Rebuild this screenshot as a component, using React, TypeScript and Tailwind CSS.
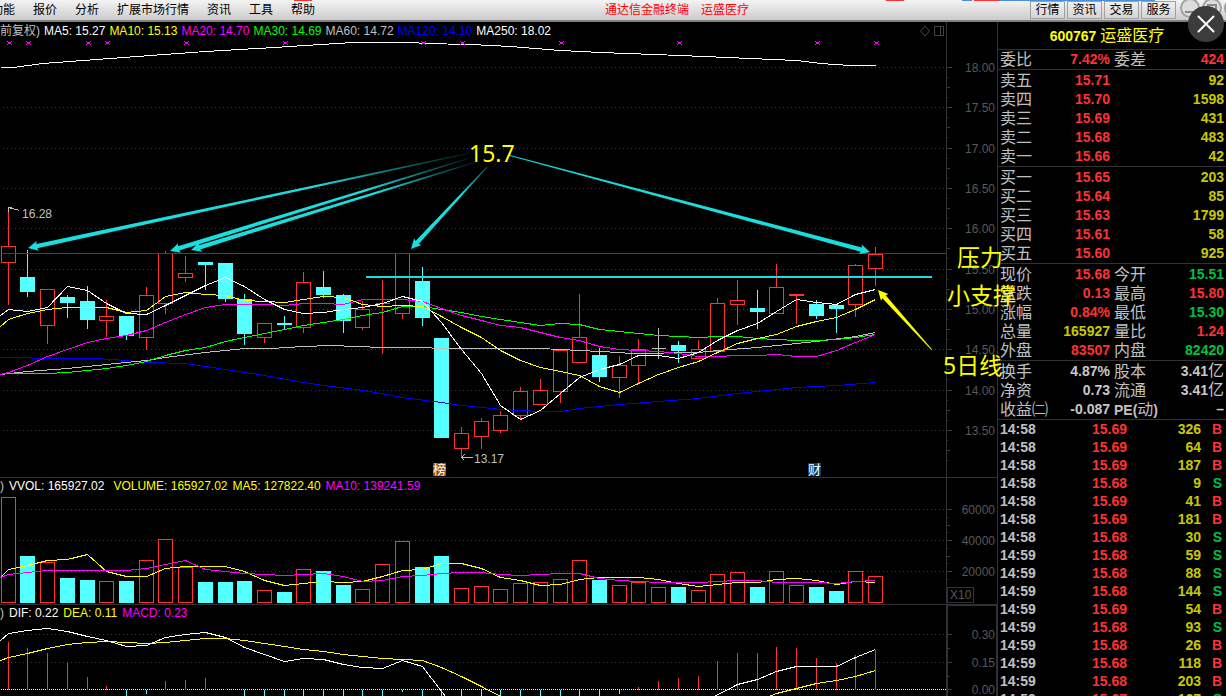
import { useId, type ReactNode } from 'react'
import { X } from 'lucide-react'

type Point = [number, number]
type Kind = 'up' | 'down' | 'flat'
type Candle = [Kind, number, number, number, number]

const RED = '#ff3232'
const CYAN = '#54ffff'
const GRAY = '#c0c0c0'
const GRID = '#3a3a3a'

const xAt = (i: number) => Math.floor(8.2 + i * 19.71)

// kind, high, body top, body bottom, low
const candles: Candle[] = [
  ['up', 208, 246, 262, 304], ['down', 249, 277, 291, 296], ['up', 288, 289, 325, 343],
  ['down', 294, 297, 302, 317], ['down', 285, 301, 319, 328], ['up', 299, 316, 320, 336],
  ['down', 316, 316, 335, 339], ['up', 286, 295, 337, 349], ['up', 250, 253, 303, 313],
  ['up', 255, 273, 277, 281], ['down', 262, 262, 264, 289], ['down', 263, 263, 298, 301],
  ['down', 293, 299, 333, 344], ['up', 322, 323, 337, 342], ['down', 315, 323, 324, 328],
  ['up', 271, 282, 327, 332], ['down', 270, 287, 294, 297], ['down', 293, 295, 320, 332],
  ['up', 300, 309, 327, 329], ['up', 279, 303, 303, 353], ['up', 253, 253, 313, 318],
  ['down', 266, 281, 317, 325], ['down', 338, 338, 437, 437], ['up', 426, 433, 448, 457],
  ['up', 417, 421, 436, 448], ['up', 410, 415, 430, 432], ['up', 386, 391, 415, 418],
  ['up', 378, 390, 404, 404], ['up', 348, 350, 391, 402], ['up', 293, 337, 362, 362],
  ['down', 347, 355, 376, 381], ['up', 355, 365, 377, 397], ['up', 338, 349, 365, 383],
  ['flat', 327, 348, 348, 358], ['down', 340, 345, 350, 362], ['up', 339, 349, 358, 358],
  ['up', 297, 303, 351, 351], ['up', 279, 300, 304, 324], ['down', 289, 308, 311, 328],
  ['up', 263, 287, 313, 313], ['up', 293, 294, 295, 323], ['down', 299, 304, 315, 318],
  ['down', 305, 305, 308, 332], ['up', 263, 265, 304, 316], ['up', 246, 254, 268, 285],
]

const volumeTops = [
  497, 556, 562, 578, 580, 581, 581, 560, 539, 567, 582, 582, 581, 590, 592, 569, 571, 585, 589, 564, 541, 567, 556,
  588, 586, 589, 583, 582, 579, 560, 580, 585, 582, 587, 587, 590, 574, 572, 587, 571, 585, 587, 591, 571, 576,
]

// bar end of each MACD column, the zero line is at 689
const macdEnds = [
  641, 647, 652, 662, 676, 685, 697, 693, 680, 679, 677, 688, 697, 697, 697, 697, 697, 697, 697, 697, 691, 697, 697,
  697, 697, 697, 697, 697, 697, 697, 697, 693, 686, 680, 677, 675, 660, 652, 652, 646, 647, 657, 662, 654, 649,
]

const ma5 = [
  309, 311, 307, 286, 290, 303, 313, 314, 305, 295, 285, 277, 286, 299, 309, 313, 312, 309, 307, 303, 296, 301, 322,
  349, 373, 405, 419, 410, 393, 377, 369, 364, 355, 355, 358, 352, 340, 330, 323, 311, 299, 302, 304, 294, 289,
]
const ma10 = [
  319, 313, 309, 307, 307, 307, 312, 310, 296, 292, 294, 295, 300, 301, 302, 299, 296, 297, 304, 306, 305, 306, 316,
  327, 337, 350, 360, 367, 371, 375, 386, 392, 383, 374, 367, 361, 352, 343, 338, 334, 326, 321, 317, 309, 299,
]
const ma20 = [
  372, 365, 356, 349, 342, 338, 335, 330, 322, 314, 307, 304, 304, 304, 305, 303, 303, 304, 299, 299, 299, 301, 308,
  315, 320, 325, 327, 332, 337, 340, 346, 349, 350, 351, 353, 356, 356, 355, 355, 354, 356, 356, 350, 342, 334,
]
const ma30 = [
  373, 373, 373, 372, 370, 368, 365, 361, 355, 350, 347, 341, 337, 333, 329, 325, 322, 319, 315, 312, 306, 306, 309,
  312, 316, 319, 322, 325, 323, 324, 329, 331, 333, 335, 336, 337, 336, 336, 338, 339, 340, 340, 339, 337, 334,
]
const ma60: Point[] = [
  [0, 374], [27, 371], [67, 368], [106, 364], [126, 362], [146, 360], [165, 357], [205, 352], [244, 348], [270, 348],
  [303, 346], [330, 345], [382, 347], [422, 347], [441, 348], [540, 348], [579, 350], [619, 352], [630, 353],
  [698, 352], [717, 350], [757, 347], [796, 343], [816, 341], [855, 336], [875, 332],
]
const ma120: Point[] = [
  [0, 357], [60, 358], [96, 358], [126, 360], [146, 362], [185, 363], [205, 366], [225, 369], [264, 375], [303, 382],
  [323, 385], [363, 390], [402, 397], [441, 402], [461, 405], [501, 409], [540, 411], [560, 411], [579, 408],
  [619, 404], [658, 401], [698, 398], [737, 393], [757, 391], [796, 387], [836, 385], [875, 382],
]
const ma250: Point[] = [
  [0, 67], [13, 67], [42, 63], [96, 59], [150, 55], [205, 51], [274, 47], [320, 44], [353, 42], [413, 42], [423, 43],
  [470, 44], [510, 46], [560, 50], [600, 52], [680, 55], [750, 58], [796, 60], [820, 63], [850, 65], [875, 65],
]

const volMa5 = [
  569, 565, 560, 559, 554, 571, 576, 576, 568, 566, 566, 566, 571, 580, 585, 583, 581, 582, 581, 576, 570, 569, 563,
  563, 568, 577, 580, 585, 584, 579, 577, 577, 577, 579, 583, 586, 584, 582, 582, 579, 578, 580, 584, 581, 582,
]
const volMa10 = [
  574, 572, 570, 570, 570, 570, 570, 568, 564, 560, 569, 571, 573, 574, 575, 574, 573, 576, 581, 580, 576, 575, 573,
  572, 572, 574, 575, 574, 573, 573, 578, 580, 581, 582, 582, 582, 581, 580, 580, 582, 582, 582, 583, 581, 580,
]

const difStart = [
  633, 630, 628, 631, 636, 640, 646, 645, 637, 634, 632, 637, 647, 654, 661, 658, 659, 664, 667, 668, 660, 666, 691,
]
const difEnd: Point[] = [
  [712, 697], [737, 684], [757, 679], [776, 671], [796, 666], [836, 666], [855, 657], [875, 649],
]
const deaStart = [
  657, 653, 648, 644, 642, 641, 642, 643, 642, 640, 638, 638, 640, 643, 646, 649, 651, 654, 656, 658, 659, 660, 667,
  676, 686,
]
const deaEnd: Point[] = [[766, 697], [776, 693], [796, 688], [816, 683], [836, 680], [855, 676], [875, 670]]

const series = (ys: number[], start: number): Point[] => [[0, start], ...ys.map((y, i): Point => [xAt(i), y])]

const priceLabels: [number, string][] = [
  [67, '18.00'], [107, '17.50'], [148, '17.00'], [188, '16.50'], [228, '16.00'],
  [269, '15.50'], [309, '15.00'], [349, '14.50'], [390, '14.00'], [430, '13.50'],
]
const volumeLabels: [number, string][] = [[509, '60000'], [540, '40000'], [571, '20000']]
const macdLabels: [number, string][] = [[634, '0.30'], [662, '0.15'], [689, '0.00']]

function Line({ points, color }: { points: Point[]; color: string }) {
  return <polyline points={points.map((p) => p.join(',')).join(' ')} fill="none" stroke={color} />
}

function GridLines({ ys }: { ys: number[] }) {
  return (
    <>
      {ys.map((y) => (
        <line key={y} x1="2" x2="946" y1={y} y2={y} stroke={GRID} strokeDasharray="1 3" />
      ))}
    </>
  )
}

function Arrow({ from, to, color, fade }: { from: Point; to: Point; color: string; fade: number }) {
  const id = useId()
  const length = Math.hypot(to[0] - from[0], to[1] - from[1])
  const ux = (to[0] - from[0]) / length
  const uy = (to[1] - from[1]) / length
  const at = (back: number, side: number) =>
    `${to[0] - ux * back - uy * side},${to[1] - uy * back + ux * side}`
  const points = [
    at(length, 0.5), at(9, 2.2), at(10, 5), at(0, 0), at(10, -5), at(9, -2.2), at(length, -0.5),
  ].join(' ')

  return (
    <>
      <linearGradient id={id} gradientUnits="userSpaceOnUse" x1={from[0]} y1={from[1]} x2={to[0]} y2={to[1]}>
        <stop offset="0" stopColor={color} stopOpacity={fade} />
        <stop offset="0.35" stopColor={color} />
      </linearGradient>
      <polygon points={points} fill={`url(#${id})`} />
    </>
  )
}

function Legend({ items, children }: { items: [string, string][]; children?: ReactNode }) {
  return (
    <div className="flex h-4 items-center gap-[5px] overflow-hidden text-xs whitespace-nowrap">
      {items.map(([text, color]) => (
        <span key={text} className={color}>
          {text}
        </span>
      ))}
      {children}
    </div>
  )
}

function Axis({ top, height, labels }: { top: number; height: number; labels: [number, string][] }) {
  const step = labels[1][0] - labels[0][0]
  return (
    <svg className="block w-full" viewBox={`0 ${top} 50 ${height}`} fontSize="12">
      <g stroke={GRID} shapeRendering="crispEdges" transform="translate(0 0.5)">
        {labels.map(([y]) => (
          <g key={y}>
            <path d={`M0 ${y}h5`} />
            <path d={`M0 ${y + Math.round(step / 2)}h3`} />
            <path d={`M0 ${y + Math.round(step / 4)}h1`} />
            <path d={`M0 ${y + Math.round((step * 3) / 4)}h1`} />
          </g>
        ))}
      </g>
      {labels.map(([y, text]) => (
        <text key={y} x="48" y={y + 5} textAnchor="end" fill="#585858">
          {text}
        </text>
      ))}
    </svg>
  )
}

function PriceChart() {
  return (
    <svg className="block h-[437px] w-full" viewBox="0 40 946 437" role="img" aria-label="K线图">
      <g shapeRendering="crispEdges" transform="translate(0.5 0.5)">
        <GridLines ys={priceLabels.map(([y]) => y)} />
        {candles.map(([kind, high, top, bottom, low], i) => {
          const color = kind === 'up' ? RED : kind === 'down' ? CYAN : GRAY
          return (
            <g key={i} stroke={color}>
              <line x1={xAt(i)} x2={xAt(i)} y1={high} y2={low + 0.5} />
              {top === bottom ? (
                <line x1={xAt(i) - 7} x2={xAt(i) + 7} y1={top} y2={top} />
              ) : (
                <rect
                  x={xAt(i) - 7}
                  y={top}
                  width="14"
                  height={bottom - top}
                  fill={kind === 'down' ? CYAN : '#000'}
                />
              )}
            </g>
          )
        })}
        <Line points={ma250} color="#fff" />
        <Line points={ma120} color="#0000ff" />
        <Line points={ma60} color={GRAY} />
        <Line points={series(ma30, 374)} color="#00ff00" />
        <Line points={series(ma20, 374)} color="#ff00ff" />
        <Line points={series(ma10, 326)} color="#ffff00" />
        <Line points={series(ma5, 315)} color="#fff" />
        <line x1="0" x2="946" y1="253" y2="253" stroke="#e00000" />
        <path d="M8 207h3M8 207v4M8 207l11 3" stroke={GRAY} fill="none" />
        <path d="M461 457h11M461 457l3 -3M461 457l3 3" stroke={GRAY} fill="none" />
      </g>
      {[9, 28, 88, 107, 186, 285, 423, 462, 561, 679, 817, 876].map((x) => (
        <path
          key={x}
          d={`M${x - 2} 41h1v1h3v-1h1v1h-1v2h1v1h-1v-1h-3v1h-1v-1h1v-2h-1z`}
          fill="#ff00ff"
          shapeRendering="crispEdges"
        />
      ))}
      <rect x="366" y="276" width="566" height="2" fill="#18dede" />
      <Arrow from={[470, 153]} to={[28, 248]} color="#18dede" fade={0.1} />
      <Arrow from={[470, 158]} to={[170, 251]} color="#18dede" fade={0.1} />
      <Arrow from={[476, 162]} to={[191, 250]} color="#18dede" fade={0.1} />
      <Arrow from={[487, 167]} to={[411, 249]} color="#18dede" fade={0.4} />
      <Arrow from={[508, 155]} to={[870, 252]} color="#18dede" fade={0.9} />
      <Arrow from={[932, 350]} to={[878, 290]} color="#ffff00" fade={0.9} />
      <g fontSize="12" fill={GRAY}>
        <text x="22" y="218">16.28</text>
        <text x="474" y="463">13.17</text>
      </g>
      <text x="469" y="162" fontSize="23" fill="#ffff00" className="font-['Noto_Sans',sans-serif]">
        15.7
      </text>
      <rect x="433" y="463" width="13" height="13" fill="#a05008" />
      <text x="433" y="474" fontSize="13" fill="#fff">榜</text>
      <rect x="808" y="463" width="13" height="13" fill="#084068" />
      <text x="808" y="474" fontSize="13" fill="#fff">财</text>
    </svg>
  )
}

function VolumeChart() {
  return (
    <svg className="block h-[110px] w-full" viewBox="0 494 946 110" role="img" aria-label="成交量">
      <g shapeRendering="crispEdges" transform="translate(0.5 0.5)">
        <GridLines ys={volumeLabels.map(([y]) => y)} />
        {volumeTops.map((top, i) => {
          const down = candles[i][0] === 'down'
          return (
            <rect
              key={i}
              x={xAt(i) - 7}
              y={top}
              width="14"
              height={602 - top}
              fill={down ? CYAN : '#000'}
              stroke={down ? CYAN : RED}
            />
          )
        })}
        <Line points={series(volMa5, 577)} color="#ffff00" />
        <Line points={series(volMa10, 577)} color="#ff00ff" />
      </g>
    </svg>
  )
}

function MacdChart() {
  return (
    <svg className="block h-[75px] w-full" viewBox="0 621 946 75" role="img" aria-label="MACD">
      <g shapeRendering="crispEdges" transform="translate(0.5 0.5)">
        <GridLines ys={[634, 662]} />
        <line x1="0" x2="946" y1="689" y2="689" stroke="#fff" strokeDasharray="1 1" />
        {macdEnds.map((end, i) => (
          <line key={i} x1={xAt(i)} x2={xAt(i)} y1="689" y2={end} stroke={end < 689 ? RED : CYAN} />
        ))}
        <Line points={[...series(difStart, 640), [446, 697]]} color="#fff" />
        <Line points={difEnd} color="#fff" />
        <Line points={[...series(deaStart, 660), [502, 697]]} color="#ffff00" />
        <Line points={deaEnd} color="#ffff00" />
      </g>
    </svg>
  )
}

const quoteRed = 'text-[#ff3232]'
const quoteGreen = 'text-[#00c040]'
const quoteYellow = 'text-[#c8c800]'
const quoteGray = 'text-[#c8c8c8]'

const asks = [['卖五', '15.71', '92'], ['卖四', '15.70', '1598'], ['卖三', '15.69', '431'], ['卖二', '15.68', '483'], ['卖一', '15.66', '42']]
const bids = [['买一', '15.65', '203'], ['买二', '15.64', '85'], ['买三', '15.63', '1799'], ['买四', '15.61', '58'], ['买五', '15.60', '925']]

type StatRow = [string, string, string, ReactNode, ReactNode, string]

const ratio: StatRow[] = [['委比', '7.42%', quoteRed, '委差', '424', quoteRed]]
const quote: StatRow[] = [
  ['现价', '15.68', quoteRed, '今开', '15.51', quoteGreen],
  ['涨跌', '0.13', quoteRed, '最高', '15.80', quoteRed],
  ['涨幅', '0.84%', quoteRed, '最低', '15.30', quoteGreen],
  ['总量', '165927', quoteYellow, '量比', '1.24', quoteRed],
  ['外盘', '83507', quoteRed, '内盘', '82420', quoteGreen],
]
const shares = (
  <>
    3.41<span className="text-base leading-none font-normal">亿</span>
  </>
)
const basics: StatRow[] = [
  ['换手', '4.87%', quoteGray, '股本', shares, quoteGray],
  ['净资', '0.73', quoteGray, '流通', shares, quoteGray],
  [
    '收益㈡',
    '-0.087',
    quoteGray,
    <>
      <span className="text-sm leading-none font-bold">PE(</span>动<span className="text-sm leading-none font-bold">)</span>
    </>,
    '–',
    quoteGray,
  ],
]

const ticks: [string, string, string, 'B' | 'S'][] = [
  ['14:58', '15.69', '326', 'B'], ['14:58', '15.69', '64', 'B'], ['14:58', '15.69', '187', 'B'],
  ['14:58', '15.68', '9', 'S'], ['14:58', '15.69', '41', 'B'], ['14:58', '15.69', '181', 'B'],
  ['14:58', '15.68', '30', 'S'], ['14:59', '15.68', '59', 'S'], ['14:59', '15.68', '88', 'S'],
  ['14:59', '15.68', '144', 'S'], ['14:59', '15.69', '54', 'B'], ['14:59', '15.68', '93', 'S'],
  ['14:59', '15.68', '26', 'B'], ['14:59', '15.68', '118', 'B'], ['14:59', '15.68', '203', 'B'],
  ['14:59', '15.67', '167', 'S'],
]

function StatTable({ rows }: { rows: StatRow[] }) {
  return (
    <table className="w-full table-fixed leading-[19px] whitespace-nowrap">
      <tbody>
        {rows.map(([label, value, color, label2, value2, color2]) => (
          <tr key={label}>
            <th className="w-12 text-left text-base leading-[19px] font-normal">{label}</th>
            <td className={`w-[62px] text-right text-sm leading-[19px] font-bold ${color}`}>{value}</td>
            <th className="w-[52px] pl-1 text-left text-base leading-[19px] font-normal">{label2}</th>
            <td className={`text-right text-sm leading-[19px] font-bold ${color2}`}>{value2}</td>
          </tr>
        ))}
      </tbody>
    </table>
  )
}

function DepthTable({ rows }: { rows: string[][] }) {
  return (
    <table className="w-full table-fixed whitespace-nowrap">
      <tbody>
        {rows.map(([label, price, volume]) => (
          <tr key={label}>
            <th className="w-12 text-left text-base leading-[19px] font-normal">{label}</th>
            <td className={`w-[62px] text-right text-sm leading-[19px] font-bold ${quoteRed}`}>{price}</td>
            <td className={`text-right text-sm leading-[19px] font-bold ${quoteYellow}`}>{volume}</td>
          </tr>
        ))}
      </tbody>
    </table>
  )
}

function Block({ children }: { children: ReactNode }) {
  return <div className="border-b border-[#323232] px-0.5 pt-px">{children}</div>
}

function QuotePanel() {
  return (
    <aside className="w-[229px] shrink-0 overflow-hidden border-l border-[#323232] text-[#c0c0c0]">
      <h1 className="flex h-7 items-center justify-center gap-1 border-b border-[#323232] pr-2.5 text-[#ffff00]">
        <span className="text-sm font-bold">600767</span>
        <span className="text-base">运盛医疗</span>
      </h1>
      <div className="border-b border-[#323232] px-0.5">
        <StatTable rows={ratio} />
      </div>
      <Block>
        <DepthTable rows={asks} />
      </Block>
      <Block>
        <DepthTable rows={bids} />
      </Block>
      <Block>
        <StatTable rows={quote} />
      </Block>
      <Block>
        <StatTable rows={basics} />
      </Block>
      <table className="mx-0.5 w-[224px] table-fixed text-sm leading-[18px] font-bold">
        <tbody>
          {ticks.map(([time, price, volume, side], i) => (
            <tr key={i}>
              <td className="w-11">{time}</td>
              <td className={`w-[83px] text-right ${quoteRed}`}>{price}</td>
              <td className={`w-[74px] text-right ${quoteYellow}`}>{volume}</td>
              <td className={`pr-0.5 text-right ${side === 'B' ? quoteRed : quoteGreen}`}>{side}</td>
            </tr>
          ))}
        </tbody>
      </table>
    </aside>
  )
}

function TopBar() {
  return (
    <header className="relative flex h-[22px] shrink-0 items-center overflow-hidden border-b-2 border-[#808080] bg-linear-to-b from-[#f4f4f4] to-[#cccccc] text-xs text-black">
      <nav className="-ml-[18px] flex">
        {['功能', '报价', '分析', '扩展市场行情', '资讯', '工具', '帮助'].map((item) => (
          <button key={item} type="button" className="px-[9px] leading-5 whitespace-nowrap">
            {item}
          </button>
        ))}
      </nav>
      <div className="mx-auto flex gap-3 leading-5 whitespace-nowrap text-[#ff0000]">
        <span>通达信金融终端</span>
        <span>运盛医疗</span>
      </div>
      <div className="flex items-center gap-0.5">
        {['行情', '资讯', '交易', '服务'].map((item) => (
          <button
            key={item}
            type="button"
            className="h-[18px] w-[35px] border border-[#a0a0a0] bg-linear-to-b from-[#f0f0f0] to-[#d4d4d4] leading-4 whitespace-nowrap"
          >
            {item}
          </button>
        ))}
        <svg className="ml-0.5 h-5 w-[46px]" viewBox="0 0 46 20" fill="#dcdcdc" stroke="#a0a0a0" strokeWidth="2">
          <circle cx="10" cy="8" r="9" />
          <circle cx="32" cy="8" r="9" />
          <circle cx="54" cy="8" r="9" />
          <path d="M5 12h10" stroke="#888" />
          <path d="M28 5h8v7h-8z" fill="none" stroke="#888" />
        </svg>
      </div>
      <svg className="absolute inset-x-0 top-0 h-px w-full" viewBox="0 0 1226 1" preserveAspectRatio="none">
        <path d="M294 0h18v1h-18zM886 0h18v1h-18zM974 0h26v1h-26z" fill="#ff3232" />
        <path d="M962 0h10v1h-10zM1000 0h155v1h-155z" fill="#4a90d8" />
      </svg>
    </header>
  )
}

export default function App() {
  return (
    <div className="relative flex h-screen flex-col overflow-hidden bg-black font-['Liberation_Sans','Noto_Sans_CJK_SC',sans-serif]">
      <TopBar />
      <main className="flex min-h-0 flex-1">
        <div className="flex min-w-0 flex-1 flex-col">
          <section className="flex shrink-0 border-b border-[#323232]">
            <div className="min-w-0 flex-1">
              <div className="py-px">
                <Legend
                  items={[
                    ['前复权)', 'text-[#c0c0c0] -mr-px'],
                    ['MA5: 15.27', 'text-white -mr-px'],
                    ['MA10: 15.13', 'text-[#ffff00] -mr-px'],
                    ['MA20: 14.70', 'text-[#ff00ff] -mr-px'],
                    ['MA30: 14.69', 'text-[#00ff00] -mr-px'],
                    ['MA60: 14.72', 'text-[#c0c0c0] -mr-px'],
                    ['MA120: 14.10', 'text-[#0000ff] -mr-px'],
                    ['MA250: 18.02', 'text-white'],
                  ]}
                >
                  <svg className="mr-0.5 ml-auto h-3 w-6" viewBox="0 0 24 12" fill="none" stroke="#444">
                    <path d="M5 1l4.500 5l-4.500 5l-4.500 -5z" />
                    <path d="M14.500 1.500h9v9h-9zM20.500 1.500v9" />
                  </svg>
                </Legend>
              </div>
              <PriceChart />
            </div>
            <div className="relative z-10 w-[51px] shrink-0 border-l border-[#323232] pt-[18px]">
              <Axis top={40} height={437} labels={priceLabels} />
              <div className="absolute top-0 -left-1 text-[23px] leading-8 whitespace-nowrap text-[#ffff00]">
                <p className="mt-[220px] ml-3.5">压力</p>
                <p className="mt-1.5 ml-1">小支撑</p>
                <p className="mt-[37px]">
                  <span className="font-['Noto_Sans',sans-serif]">5</span>日线
                </p>
              </div>
            </div>
          </section>
          <section className="flex shrink-0 border-b border-[#323232]">
            <div className="min-w-0 flex-1">
              <Legend
                items={[
                  [')', 'text-[#c0c0c0]'],
                  ['VVOL: 165927.02', 'text-white mr-1'],
                  ['VOLUME: 165927.02', 'text-[#ffff00]'],
                  ['MA5: 127822.40', 'text-[#ffff00]'],
                  ['MA10: 139241.59', 'text-[#ff00ff]'],
                ]}
              />
              <VolumeChart />
            </div>
            <div className="relative w-[51px] shrink-0 border-l border-[#323232] pt-4">
              <Axis top={494} height={110} labels={volumeLabels} />
              <span className="absolute bottom-px left-0 border border-[#323232] px-0.5 text-xs leading-[14px] text-[#585858]">
                X10
              </span>
            </div>
          </section>
          <section className="flex min-h-0 flex-1">
            <div className="min-w-0 flex-1">
              <Legend
                items={[
                  [')', 'text-[#c0c0c0]'],
                  ['DIF: 0.22', 'text-white'],
                  ['DEA: 0.11', 'text-[#ffff00]'],
                  ['MACD: 0.23', 'text-[#ff00ff]'],
                ]}
              />
              <MacdChart />
            </div>
            <div className="w-[51px] shrink-0 border-l border-[#323232] pt-4 shadow-[inset_1px_1px_0_#323232,inset_-1px_0_0_#323232]">
              <Axis top={621} height={75} labels={macdLabels} />
            </div>
          </section>
        </div>
        <QuotePanel />
      </main>
      <button
        type="button"
        aria-label="关闭"
        className="absolute top-1.5 right-0.5 z-20 flex size-9 items-center justify-center rounded-full bg-[#3c3c3c] text-white"
      >
        <X className="size-[30px]" strokeWidth={1.6} />
      </button>
    </div>
  )
}
